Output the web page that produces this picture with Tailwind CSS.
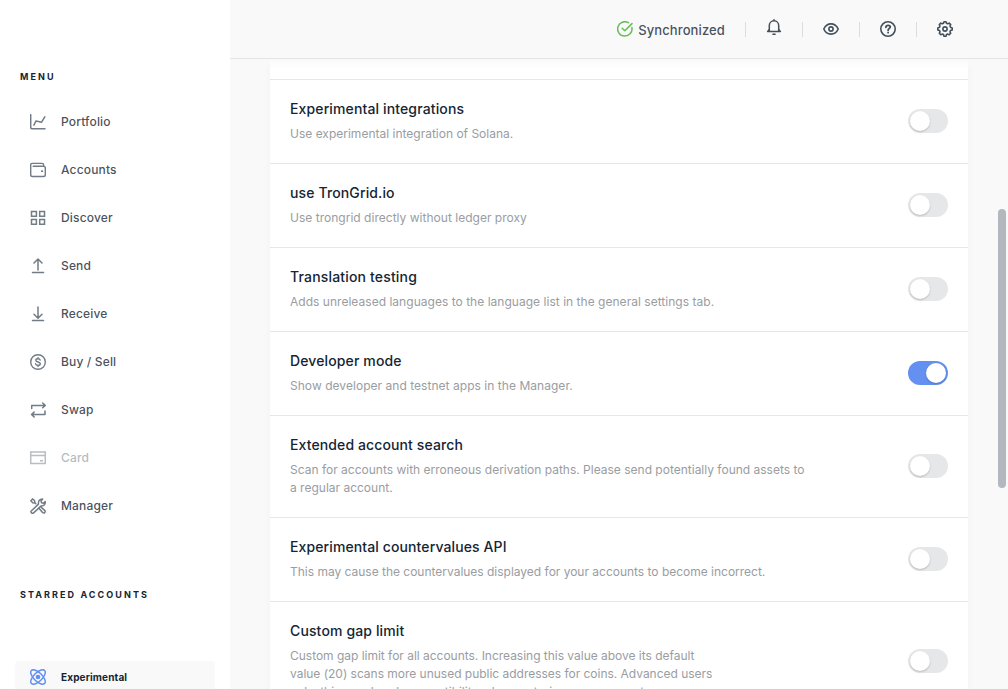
<!DOCTYPE html>
<html lang="en">
<head>
<meta charset="utf-8">
<title>Settings</title>
<script src="https://cdn.jsdelivr.net/npm/@tailwindcss/browser@4"></script>
</head>
<body class="flex h-screen overflow-hidden bg-[#f9f9f9] font-['Inter',sans-serif] text-[#142533]">
<aside class="flex w-[230px] shrink-0 flex-col bg-white pt-[70px]">
  <h2 class="pl-5 text-[9px] leading-[14px] font-bold tracking-[2.08px]">MENU</h2>
  <nav class="mt-[14px] flex flex-col text-[12px] font-medium tracking-[0.16px] text-[#142533]/80">
    <a class="flex h-12 items-center gap-[15px] pl-[30px]"><svg class="size-4 text-[#717c87]" viewBox="0 0 16 16" fill="none" stroke="currentColor" stroke-width="1.5" stroke-linecap="round" stroke-linejoin="round"><path d="M.7.7v12.6q0 1.4 1.400 1.400H15M3.900 11.200 6 6.900l5.600 1.300 3.200-5.400"/></svg>Portfolio</a>
    <a class="flex h-12 items-center gap-[15px] pl-[30px]"><svg class="size-4 text-[#717c87]" viewBox="0 0 16 16" fill="none" stroke="currentColor" stroke-width="1.4" stroke-linecap="round" stroke-linejoin="round"><path d="M13.600 4.200V2.900q0-1.500-1.500-1.500H2.300Q.7 1.400.7 3v9.700q0 1.800 1.800 1.800h11q1.800 0 1.800-1.800V6q0-1.800-1.800-1.800H3.200"/><path d="M11.800 9.200h.5" stroke-width="1.7"/></svg>Accounts</a>
    <a class="flex h-12 items-center gap-[15px] pl-[30px]"><svg class="size-4 text-[#717c87]" viewBox="0 0 16 16" fill="none" stroke="currentColor" stroke-width="1.5"><path d="M1.500 1.500h4.900v4.700H1.500zM9.700 1.500h4.800v4.700H9.700zM1.500 9.600h4.900v4.700H1.500zM9.700 9.600h4.800v4.700H9.700z"/></svg>Discover</a>
    <a class="flex h-12 items-center gap-[15px] pl-[30px]"><svg class="size-4 text-[#717c87]" viewBox="0 0 16 16" fill="none" stroke="currentColor" stroke-width="1.5" stroke-linecap="round" stroke-linejoin="round"><path d="M8 12V1.200M4 5l4-4 4 4M2.500 14.600h11"/></svg>Send</a>
    <a class="flex h-12 items-center gap-[15px] pl-[30px]"><svg class="size-4 text-[#717c87]" viewBox="0 0 16 16" fill="none" stroke="currentColor" stroke-width="1.5" stroke-linecap="round" stroke-linejoin="round"><path d="M8 1v11M4 8.200l4 4 4-4M2.500 14.600h11"/></svg>Receive</a>
    <a class="flex h-12 items-center gap-[15px] pl-[30px]"><svg class="size-4 text-[#717c87]" viewBox="0 0 16 16" fill="none" stroke="currentColor" stroke-width="1.4" stroke-linecap="round"><circle cx="8" cy="8" r="7.300"/><path d="M10.200 6.100C10 5.200 9.200 4.700 8 4.700c-1.300 0-2.200.6-2.200 1.600C5.800 8.600 10.300 7.400 10.300 9.700c0 1-.9 1.600-2.300 1.600-1.300 0-2.200-.6-2.400-1.500M8 3.600v1M8 11.400v1"/></svg>Buy / Sell</a>
    <a class="flex h-12 items-center gap-[15px] pl-[30px]"><svg class="size-4 text-[#717c87]" viewBox="0 0 16 16" fill="none" stroke="currentColor" stroke-width="1.5" stroke-linecap="round" stroke-linejoin="round"><path d="M1.700 6.500V3.400H15M12.700 1l2.500 2.400-2.500 2.400M15 9v3.500H1.600M4.100 10.100l-2.600 2.400 2.600 2.400"/></svg>Swap</a>
    <a class="flex h-12 items-center gap-[15px] pl-[30px] opacity-40"><svg class="size-4 text-[#4f5c68]" viewBox="0 0 16 16" fill="none" stroke="currentColor" stroke-width="1.5"><path d="M.7 2.100h14.600v11.300H.7zM.7 5.600h14.600M10 10.700h3"/></svg>Card</a>
    <a class="flex h-12 items-center gap-[15px] pl-[30px]"><svg class="size-4 text-[#717c87]" viewBox="0 0 16 16" fill="none" stroke="currentColor" stroke-width="1.500" stroke-linecap="round" stroke-linejoin="round"><path d="M1 13.300 8.500 6.100C8 3 9.700.8 12.700.9L11 2.900l.5 1.900 2 .5 1.700-1.800c.5 2.500-1.200 4.600-4 4.400L3.300 15.100q-1 .5-1.800-.2T1 13.300M5.800 5.800 4.900 4.800 4.600 2.800 2.800.9.800 2.800 2.700 4.700l1.800.3M9.600 10.900l3.200 3.800q1 .7 1.900-.1t.2-2L11.600 9.600"/></svg>Manager</a>
  </nav>
  <h2 class="mt-[58px] pl-5 text-[9px] leading-[14px] font-bold tracking-[2.08px]">STARRED ACCOUNTS</h2>
  <div class="mx-[15px] mt-[59px] flex h-8 shrink-0 items-center gap-[15px] rounded bg-[#f9f9f9] pl-[15px] text-[10px] font-bold tracking-[0.14px]"><svg class="size-4 text-[#6490f1]" viewBox="0 0 16 16" fill="none" stroke="currentColor" stroke-width="1.5"><ellipse cx="8" cy="8" rx="9.300" ry="4.300" transform="rotate(45 8 8)"/><ellipse cx="8" cy="8" rx="9.300" ry="4.300" transform="rotate(-45 8 8)"/><circle cx="8" cy="8" r="1.600" fill="currentColor"/></svg><span class="pt-px">Experimental</span></div>
</aside>
<div class="flex min-w-0 flex-1 flex-col">
  <header class="flex h-[59px] shrink-0 items-center justify-end border-b border-[#e3e4e5] pr-[55px] text-[#142533]/80">
    <svg class="mr-[5px] size-4 text-[#66be54]" viewBox="0 0 16 16" fill="none" stroke="currentColor" stroke-width="1.5" stroke-linecap="round" stroke-linejoin="round"><path d="M14.900 6.500A7.200 7.200 0 1 1 11.500 1.700M5.200 7.200l2.700 2.500L15 2.600"/></svg>
    <span class="pt-0.5 text-[13px] leading-4 font-medium tracking-[0.11px]">Synchronized</span>
    <i class="mr-5 ml-5 h-[15px] w-px bg-[#dcddde]"></i>
    <svg class="mb-1 size-4" viewBox="0 0 16 16" fill="none" stroke="currentColor" stroke-width="1.5" stroke-linecap="round" stroke-linejoin="round"><path d="M8 .8v.7M3.300 11.900V6.500a4.700 4.700 0 0 1 9.400 0v5.400M1.600 12.500h12.800M3.300 10.200l-1.300 2M12.700 10.200l1.300 2M7 15.300h2"/></svg>
    <i class="mx-5 h-[15px] w-px bg-[#dcddde]"></i>
    <svg class="size-4" viewBox="0 0 16 16" fill="none" stroke="currentColor" stroke-width="1.600"><path d="M.8 8C2.300 4.600 4.900 2.900 8 2.900S13.700 4.600 15.200 8c-1.500 3.400-4.100 5.100-7.200 5.100S2.300 11.400.8 8Z"/><circle cx="8" cy="8" r="2.100"/></svg>
    <i class="mx-5 h-[15px] w-px bg-[#dcddde]"></i>
    <svg class="size-4" viewBox="0 0 16 16" fill="none" stroke="currentColor" stroke-width="1.600" stroke-linecap="round"><circle cx="8" cy="8" r="7.200"/><path d="M5.900 6.300C6 4.900 6.900 4.300 8.100 4.300s2.200.7 2.200 1.800C10.300 7.500 8.100 7.700 8.100 9.200M8.100 11.500v.2" stroke-width="1.800"/></svg>
    <i class="mx-5 h-[15px] w-px bg-[#dcddde]"></i>
    <svg class="size-4" viewBox="0 0 16 16" fill="none" stroke="currentColor" stroke-width="1.600" stroke-linejoin="round"><path d="M6.500 2.300 7 .8h2l.5 1.500 1.200.5 1.500-.7 1.500 1.500-.7 1.400.5 1.300 1.700.6v2.100l-1.700.6-.5 1.200.7 1.500-1.500 1.500-1.400-.7-1.300.5L9 15.200H7l-.5-1.600-1.300-.5-1.400.7-1.500-1.500.7-1.500-.5-1.200L.8 9V6.900l1.700-.6L3 5l-.7-1.400 1.500-1.500 1.500.7Z"/><circle cx="8" cy="8" r="2.100"/></svg>
  </header>
  <main class="relative flex-1 overflow-hidden pl-10">
    <div class="w-[698px] bg-white shadow-[0_4px_8px_rgba(0,0,0,0.03)]">
      <div class="h-5"></div>
      <section class="flex h-[84px] items-center justify-between border-t border-[#e6e7e8] px-5">
        <div><h3 class="text-[14px] leading-[18px] font-medium tracking-[0.13px]">Experimental integrations</h3><p class="mt-[7px] text-[12px] leading-[18px] text-[#999da2]">Use experimental integration of Solana.</p></div>
        <span class="mb-0.5 flex h-6 w-10 rounded-full bg-[#e6e7e8] p-0.5"><b class="size-5 rounded-full bg-white shadow-[0_1px_2px_rgba(0,0,0,0.2)]"></b></span>
      </section>
      <section class="flex h-[84px] items-center justify-between border-t border-[#e6e7e8] px-5">
        <div><h3 class="text-[14px] leading-[18px] font-medium tracking-[0.13px]">use TronGrid.io</h3><p class="mt-[7px] text-[12px] leading-[18px] tracking-[0.02px] text-[#999da2]">Use trongrid directly without ledger proxy</p></div>
        <span class="mb-0.5 flex h-6 w-10 rounded-full bg-[#e6e7e8] p-0.5"><b class="size-5 rounded-full bg-white shadow-[0_1px_2px_rgba(0,0,0,0.2)]"></b></span>
      </section>
      <section class="flex h-[84px] items-center justify-between border-t border-[#e6e7e8] px-5">
        <div><h3 class="text-[14px] leading-[18px] font-medium tracking-[0.17px]">Translation testing</h3><p class="mt-[7px] text-[12px] leading-[18px] tracking-[0.027px] text-[#999da2]">Adds unreleased languages to the language list in the general settings tab.</p></div>
        <span class="mb-0.5 flex h-6 w-10 rounded-full bg-[#e6e7e8] p-0.5"><b class="size-5 rounded-full bg-white shadow-[0_1px_2px_rgba(0,0,0,0.2)]"></b></span>
      </section>
      <section class="flex h-[84px] items-center justify-between border-t border-[#e6e7e8] px-5">
        <div><h3 class="text-[14px] leading-[18px] font-medium tracking-[0.13px]">Developer mode</h3><p class="mt-[7px] text-[12px] leading-[18px] tracking-[0.04px] text-[#999da2]">Show developer and testnet apps in the Manager.</p></div>
        <span class="mb-0.5 flex h-6 w-10 justify-end rounded-full bg-[#6490f1] p-0.5"><b class="size-5 rounded-full bg-white shadow-[0_1px_2px_rgba(0,0,0,0.2)]"></b></span>
      </section>
      <section class="flex h-[102px] items-center justify-between border-t border-[#e6e7e8] px-5">
        <div><h3 class="text-[14px] leading-[18px] font-medium tracking-[0.11px]">Extended account search</h3><p class="mt-[7px] text-[12px] leading-[18px] text-[#999da2]">Scan for accounts with erroneous derivation paths. Please send potentially found assets to<br>a regular account.</p></div>
        <span class="mb-0.5 flex h-6 w-10 rounded-full bg-[#e6e7e8] p-0.5"><b class="size-5 rounded-full bg-white shadow-[0_1px_2px_rgba(0,0,0,0.2)]"></b></span>
      </section>
      <section class="flex h-[84px] items-center justify-between border-t border-[#e6e7e8] px-5">
        <div><h3 class="text-[14px] leading-[18px] font-medium tracking-[0.11px]">Experimental countervalues API</h3><p class="mt-[7px] text-[12px] leading-[18px] tracking-[-0.012px] text-[#999da2]">This may cause the countervalues displayed for your accounts to become incorrect.</p></div>
        <span class="mb-0.5 flex h-6 w-10 rounded-full bg-[#e6e7e8] p-0.5"><b class="size-5 rounded-full bg-white shadow-[0_1px_2px_rgba(0,0,0,0.2)]"></b></span>
      </section>
      <section class="flex h-[120px] items-center justify-between border-t border-[#e6e7e8] px-5">
        <div><h3 class="text-[14px] leading-[18px] font-medium tracking-[0.13px]">Custom gap limit</h3><p class="mt-[7px] text-[12px] leading-[18px] tracking-[-0.02px] text-[#999da2]">Custom gap limit for all accounts. Increasing this value above its default<br>value (20) scans more unused public addresses for coins. Advanced users<br>only, this may break compatibility when restoring your account.</p></div>
        <span class="mb-0.5 flex h-6 w-10 rounded-full bg-[#e6e7e8] p-0.5"><b class="size-5 rounded-full bg-white shadow-[0_1px_2px_rgba(0,0,0,0.2)]"></b></span>
      </section>
    </div>
    <div class="absolute inset-x-0 top-0 h-2.5 bg-linear-to-b from-[#f9f9f9] to-[#f9f9f9]/0"></div>
    <div class="absolute top-[150px] right-[2px] h-[279px] w-2 rounded-full bg-[#b2b8bd]"></div>
  </main>
</div>
</body>
</html>
